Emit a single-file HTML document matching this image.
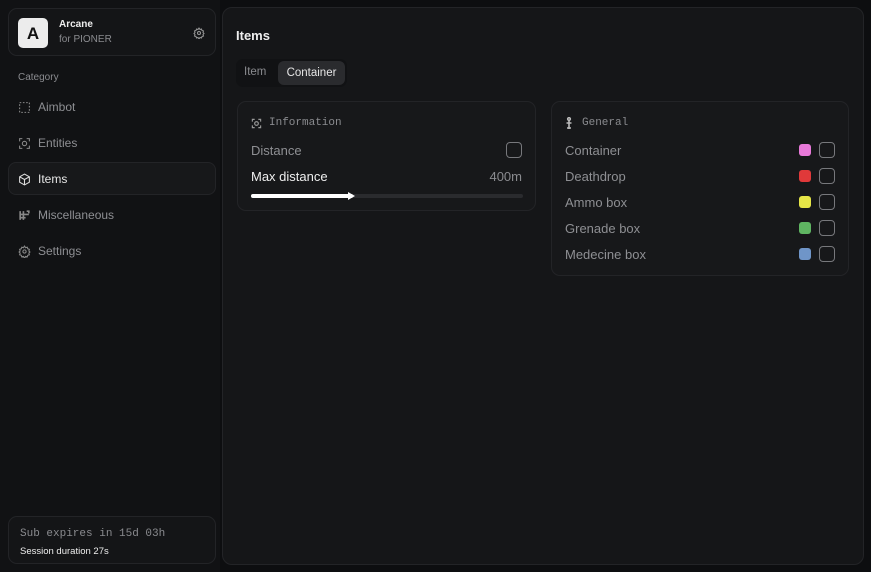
<!DOCTYPE html>
<html><head><meta charset="utf-8"><style>
*{box-sizing:border-box;margin:0;padding:0}
body{width:871px;height:572px;background:#0d0e10;font-family:"Liberation Sans",sans-serif;position:relative;overflow:hidden;color:#ddd}
.abs{position:absolute}
.card{position:absolute;border:1px solid #232427;border-radius:9px;background:#151618}
.mono{font-family:"Liberation Mono",monospace}
.nav{position:absolute;left:18px;font-size:12px;color:#8e8f93;display:flex;align-items:center;gap:7px}
.nav svg{width:13px;height:13px}
.row{position:absolute;left:13px;right:13px;font-size:13px;color:#8e8f93;display:flex;align-items:center}
.cb{width:16px;height:16px;border:1px solid #77787c;border-radius:4px;margin-left:auto}
.sw{width:12px;height:12px;border-radius:3px;margin-left:auto;margin-right:8px}
.row .sw+.cb{margin-left:0}
</style></head><body>
<div class="abs" style="left:0;top:0;width:220px;height:572px;background:#111214"></div>
<div class="card" style="left:8px;top:8px;width:208px;height:48px;background:#141517">
 <div class="abs" style="left:9px;top:9px;width:30px;height:30px;background:#ececec;border-radius:5px;color:#111;font-weight:bold;font-size:17px;text-align:center;line-height:31px">A</div>
 <div class="abs" style="left:50px;top:10px;font-size:10px;font-weight:bold;color:#eee">Arcane</div>
 <div class="abs" style="left:50px;top:25px;font-size:10px;color:#8a8b8f">for PIONER</div>
 <svg class="abs" style="left:184px;top:18px" width="12" height="12" viewBox="0 0 24 24" fill="none" stroke="#999" stroke-width="2"><circle cx="12" cy="12" r="3"/><path d="M12 2l2 3 3-1 1 3 3 1-1 3 2 2-2 2 1 3-3 1-1 3-3-1-2 3-2-3-3 1-1-3-3-1 1-3-2-2 2-2-1-3 3-1 1-3 3 1z"/></svg>
</div>
<div class="abs" style="left:18px;top:72px;font-size:10px;color:#8a8b8f">Category</div>
<div class="nav" style="top:100px"><svg viewBox="0 0 24 24" fill="none" stroke="#888" stroke-width="2" stroke-dasharray="3 3"><rect x="3" y="3" width="18" height="18"/></svg>Aimbot</div>
<div class="nav" style="top:136px"><svg viewBox="0 0 24 24" fill="none" stroke="#888" stroke-width="2"><path d="M3 8V3h5M16 3h5v5M21 16v5h-5M8 21H3v-5"/><circle cx="12" cy="12" r="4"/></svg>Entities</div>
<div class="abs" style="left:8px;top:162px;width:208px;height:33px;border:1px solid #232427;border-radius:8px;background:#17181a"></div>
<div class="nav" style="top:172px;color:#e6e6e6"><svg viewBox="0 0 24 24" fill="none" stroke="#ddd" stroke-width="2"><path d="M12 2l9 5v10l-9 5-9-5V7z M3 7l9 5 9-5M12 12v10"/></svg>Items</div>
<div class="nav" style="top:208px"><svg viewBox="0 0 24 24" fill="none" stroke="#888" stroke-width="3"><path d="M4 4v16M10 4v16M4 10h16M4 16h10M16 4h4v4"/></svg>Miscellaneous</div>
<div class="nav" style="top:244px"><svg viewBox="0 0 24 24" fill="none" stroke="#888" stroke-width="2"><circle cx="12" cy="12" r="3"/><path d="M12 2l2 3 3-1 1 3 3 1-1 3 2 2-2 2 1 3-3 1-1 3-3-1-2 3-2-3-3 1-1-3-3-1 1-3-2-2 2-2-1-3 3-1 1-3 3 1z"/></svg>Settings</div>
<div class="card" style="left:8px;top:516px;width:208px;height:48px;background:#141517">
 <div class="abs mono" style="left:11px;top:11px;font-size:11px;color:#8a8b8f">Sub expires in 15d 03h</div>
 <div class="abs" style="left:11px;top:29px;font-size:9.5px;color:#eee">Session duration 27s</div>
</div>

<div class="card" style="left:222px;top:7px;width:642px;height:558px;background:#151618;border-radius:10px">
 <div class="abs" style="left:13px;top:20px;font-size:13px;font-weight:bold;color:#eee">Items</div>
 <div class="abs" style="left:13px;top:51px;width:111px;height:28px;background:#111214;border-radius:7px">
  <div class="abs" style="left:8px;top:7px;font-size:11.5px;color:#8a8b8f">Item</div>
  <div class="abs" style="left:42px;top:2px;width:67px;height:24px;background:#2a2b2e;border-radius:6px;font-size:11.5px;color:#e6e6e6;text-align:center;line-height:24px">Container</div>
 </div>
 <div class="card" style="left:14px;top:93px;width:299px;height:110px;background:#17181a">
  <div class="abs mono" style="left:13px;top:15px;font-size:11px;color:#8a8b8f;display:flex;gap:7px;align-items:center"><svg width="11" height="11" viewBox="0 0 24 24" fill="none" stroke="#999" stroke-width="2.5"><path d="M3 8V3h5M16 3h5v5M21 16v5h-5M8 21H3v-5"/><circle cx="12" cy="12" r="4"/></svg>Information</div>
  <div class="row" style="top:40px">Distance<div class="cb"></div></div>
  <div class="row" style="top:67px;color:#eee">Max distance<span style="margin-left:auto;color:#8a8b8f">400m</span></div>
  <div class="abs" style="left:13px;top:92px;width:272px;height:4px;background:#2a2b2e;border-radius:2px"></div>
  <div class="abs" style="left:13px;top:92px;width:102px;height:4px;background:#fff;border-radius:2px"></div>
  <div class="abs" style="left:110px;top:90px;width:0;height:0;border-left:7px solid #fff;border-top:4px solid transparent;border-bottom:4px solid transparent"></div>
 </div>
 <div class="card" style="left:328px;top:93px;width:298px;height:175px;background:#17181a">
  <div class="abs mono" style="left:13px;top:15px;font-size:11px;color:#8a8b8f;display:flex;gap:9px;align-items:center"><svg width="8" height="12" viewBox="0 0 8 12" fill="none" stroke="#bbb" stroke-width="1.6"><circle cx="4" cy="2" r="1.3"/><path d="M4 3v9M1.5 6h5M2 11h4"/></svg>General</div>
  <div class="row" style="top:40px">Container<div class="sw" style="background:#e879d9"></div><div class="cb"></div></div>
  <div class="row" style="top:66px">Deathdrop<div class="sw" style="background:#e0393a"></div><div class="cb"></div></div>
  <div class="row" style="top:92px">Ammo box<div class="sw" style="background:#e5e547"></div><div class="cb"></div></div>
  <div class="row" style="top:118px">Grenade box<div class="sw" style="background:#5fb562"></div><div class="cb"></div></div>
  <div class="row" style="top:144px">Medecine box<div class="sw" style="background:#6f95c8"></div><div class="cb"></div></div>
 </div>
</div>
</body></html>
